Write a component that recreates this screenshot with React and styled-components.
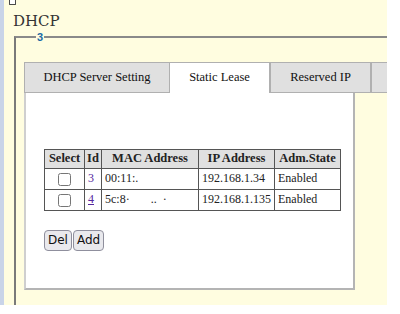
import styled, { createGlobalStyle } from "styled-components"

const Global = createGlobalStyle`
  html, body {
    margin: 0;
    padding: 0;
    background: #ffffff;
    font-family: "Liberation Serif", serif;
  }
`;

const leases = [
  { id: 3, mac: "00:11:.", ip: "192.168.1.34", state: "Enabled" },
  { id: 4, mac: "5c:8·       ..  ·", ip: "192.168.1.135", state: "Enabled" },
];

const tabs = [
  { label: "DHCP Server Setting", w: 146 },
  { label: "Static Lease", w: 100, active: true },
  { label: "Reserved IP", w: 101 },
  { label: "", w: 100 },
];

export default function App() {
  return (
    <>
      <Global />
      <Frame>
        <Mark />
        <Title>DHCP</Title>
        <Group>
          <Legend>3</Legend>
          <TabBar>
            {tabs.map((t, i) => (
              <Tab key={i} $active={t.active} $w={t.w}>
                {t.label}
              </Tab>
            ))}
          </TabBar>
          <Panel>
            <Table>
              <thead>
                <tr>
                  <Th $w={40}>Select</Th>
                  <Th $w={17}>Id</Th>
                  <Th $w={97}>MAC Address</Th>
                  <Th $w={71}>IP Address</Th>
                  <Th $w={66}>Adm.State</Th>
                </tr>
              </thead>
              <tbody>
                {leases.map((l) => (
                  <tr key={l.id}>
                    <Td $center>
                      <Check type="checkbox" />
                    </Td>
                    <Td>
                      <IdLink href="#" $under={l.id === 4}>
                        {l.id}
                      </IdLink>
                    </Td>
                    <Td $mac>{l.mac}</Td>
                    <Td>{l.ip}</Td>
                    <Td>{l.state}</Td>
                  </tr>
                ))}
              </tbody>
            </Table>
            <Buttons>
              <Btn>Del</Btn>
              <Btn>Add</Btn>
            </Buttons>
          </Panel>
        </Group>
      </Frame>
    </>
  )
}

const Frame = styled.div`
  width: 383px;
  height: 305px;
  overflow: hidden;
  background: #fffde0;
  border-left: 4px solid #c9d4e8;
  display: flex;
  flex-direction: column;
  font-family: "Liberation Serif", serif;
`;

const Mark = styled.div`
  width: 5px;
  height: 4px;
  margin-left: 5px;
  border: 1px solid #4a4a4a;
  border-top: none;
  background: #fff;
  border-radius: 0 0 1px 1px;
`;

const Title = styled.div`
  font-family: "DejaVu Serif", serif;
  font-size: 15px;
  line-height: 18px;
  color: #333;
  margin: 7px 0 0 9px;
`;

const Group = styled.fieldset`
  margin: 1px 0 0 10px;
  padding: 18px 0 0 8px;
  border: none;
  border-top: 2px solid #8a8a8a;
  border-left: 2px solid #7a7a7a;
  min-width: 0;
  width: 460px;
  height: 300px;
  box-sizing: border-box;
`;

const Legend = styled.legend`
  margin-left: 12px;
  padding: 0 1px;
  font-family: "Liberation Sans", sans-serif;
  font-weight: bold;
  font-size: 11px;
  line-height: 13px;
  color: #1b6aa5;
`;

const TabBar = styled.div`
  display: flex;
  flex-wrap: nowrap;
`;

const Tab = styled.div`
  flex: 0 0 ${(p) => p.$w}px;
  height: 31px;
  box-sizing: border-box;
  display: flex;
  align-items: center;
  justify-content: center;
  font-size: 12.5px;
  color: #111;
  background: ${(p) => (p.$active ? "#ffffff" : "#e0e0e0")};
  border: 1px solid #b0b0b0;
  border-left: ${(p) => (p.$active ? "none" : "1px solid #b0b0b0")};
  border-bottom: ${(p) => (p.$active ? "none" : "1px solid #b0b0b0")};
`;

const Panel = styled.div`
  width: 331px;
  height: 197px;
  box-sizing: border-box;
  background: #ffffff;
  border-left: 2px solid #cfcfcf;
  border-right: 2px solid #b4b4b4;
  border-bottom: 2px solid #b4b4b4;
  padding: 56px 0 0 18px;
`;

const Table = styled.table`
  border-collapse: collapse;
  table-layout: fixed;
  border: 1px solid #555;
`;

const Th = styled.th`
  width: ${(p) => p.$w}px;
  box-sizing: border-box;
  height: 19px;
  padding: 0 2px;
  background: #e0e0e0;
  border: 1px solid #555;
  font-size: 12.5px;
  font-weight: bold;
  color: #222;
  white-space: nowrap;
`;

const Td = styled.td`
  height: 20px;
  padding: 0 3px;
  border: 1px solid #555;
  font-size: 12px;
  color: #222;
  white-space: ${(p) => (p.$mac ? "pre" : "nowrap")};
  text-align: ${(p) => (p.$center ? "center" : "left")};
  overflow: hidden;
`;

const Check = styled.input`
  margin: 0;
  width: 13px;
  height: 13px;
  vertical-align: middle;
`;

const IdLink = styled.a`
  color: #55279e;
  text-decoration: ${(p) => (p.$under ? "underline" : "none")};
`;

const Buttons = styled.div`
  display: flex;
  gap: 1px;
  margin-top: 19px;
`;

const Btn = styled.button`
  font-family: "DejaVu Sans", sans-serif;
  font-size: 12px;
  color: #111;
  height: 21px;
  padding: 0 3px;
  background: #e9e9ed;
  border: 1px solid #8f8f9d;
  border-radius: 4px;
`;
